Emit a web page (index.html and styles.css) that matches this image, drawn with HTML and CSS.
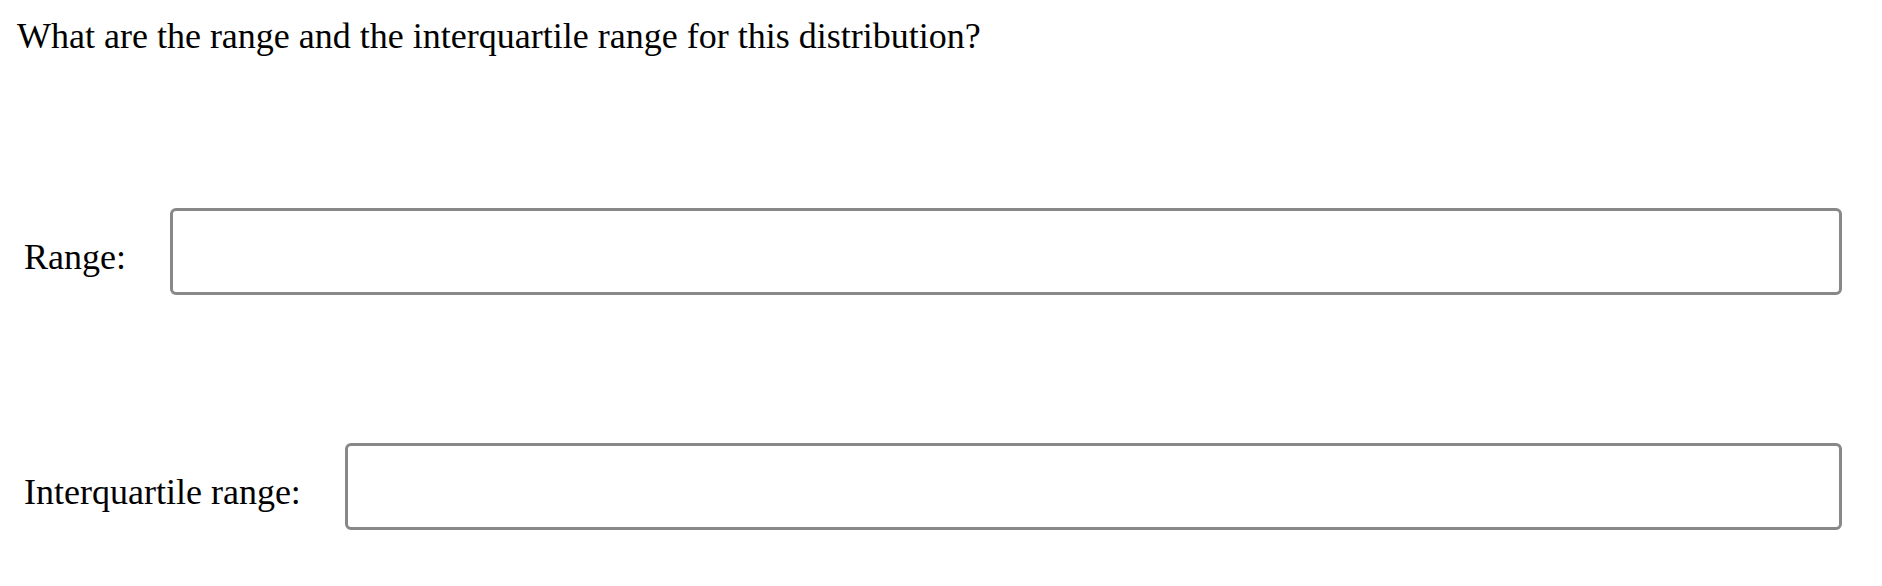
FILE: index.html
```html
<!DOCTYPE html>
<html>
<head>
<meta charset="utf-8">
<link rel="stylesheet" href="styles.css">
</head>
<body>
<p class="question">What are the range and the interquartile range for this distribution?</p>
<div class="field field-first">
  <label class="label" for="r">Range:</label>
  <input class="answer" id="r" type="text">
</div>
<div class="field">
  <label class="label" for="iqr">Interquartile range:</label>
  <input class="answer" id="iqr" type="text">
</div>
</body>
</html>
```
FILE: styles.css
```css
html, body {
  margin: 0;
  padding: 0;
  background: #fff;
}
body {
  font-family: "Liberation Serif", "Times New Roman", serif;
  font-size: 36px;
  color: #000;
  padding: 0 40px 0 17px;
}
.question {
  margin: 0;
  padding-top: 16px;
  line-height: 40px;
}
.field {
  display: flex;
  align-items: center;
  gap: 44px;
  padding-left: 7px;
  height: 87px;
  margin-top: 148px;
}
.field-first {
  margin-top: 152px;
}
.label {
  white-space: nowrap;
  padding-top: 10px;
}
.answer {
  flex: 1;
  height: 87px;
  box-sizing: border-box;
  border: 3px solid #888888;
  border-radius: 6px;
  font: inherit;
  padding: 0 10px;
  outline: none;
}
```
